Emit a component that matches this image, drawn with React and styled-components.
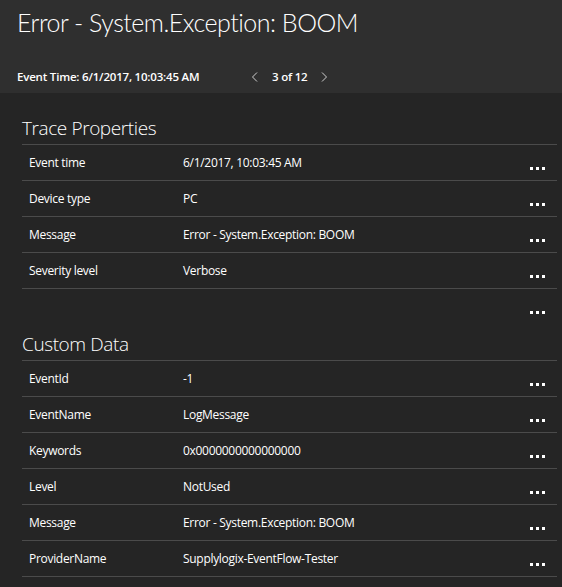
import React from 'react';
import styled, { createGlobalStyle } from 'styled-components';

const GlobalStyle = createGlobalStyle`
    html, body {
        margin: 0;
        padding: 0;
        background: #252525;
    }
    body {
        font-family: "Open Sans", "Noto Sans", sans-serif;
        color: #ffffff;
    }
`

const Header = styled.div`
    background-color: #2f2f2f;
    height: 93px;
    padding: 0 17px;
    box-sizing: border-box;
    display: flex;
    flex-direction: column;
`

const Title = styled.h1`
    margin: 0;
    padding-top: 5px;
    font-family: Lato, "Open Sans", sans-serif;
    font-size: 25px;
    font-weight: 300;
    letter-spacing: -0.5px;
    line-height: 34px;
`

const SubBar = styled.div`
    display: flex;
    align-items: center;
    margin-top: 30px;
    font-size: 11.5px;
    font-weight: 600;
    letter-spacing: -0.2px;
`

const EventTime = styled.span`
    width: 232px;
`

const Pager = styled.div`
    display: flex;
    align-items: center;
    gap: 11px;

    svg {
        width: 12px;
        height: 12px;
    }
`

const Body = styled.div`
    padding: 16px 5px 0 22px;
`

const SectionTitle = styled.h2`
    margin: 0;
    font-size: 19px;
    font-weight: 300;
    letter-spacing: -0.4px;
    line-height: 38px;
    height: 35px;
    border-bottom: 1px solid #4b4b4b;
`

const Row = styled.div`
    display: flex;
    align-items: center;
    height: ${({ bare }) => (bare ? '36px' : '35px')};
    border-bottom: ${({ bare }) => (bare ? 'none' : '1px solid #4b4b4b')};
    font-size: 12px;
    letter-spacing: -0.3px;
`

const Label = styled.div`
    width: 154px;
    padding-left: 7px;
`

const Value = styled.div`
    flex: 1;
`

const More = styled.div`
    margin-right: 12px;
    margin-top: 11px;
    display: flex;
    gap: 3px;

    span {
        width: 3px;
        height: 3px;
        background: #ffffff;
    }
`

const Dots = () => (
    <More>
        <span />
        <span />
        <span />
    </More>
)

const Chevron = ({ dir }) => (
    <svg viewBox="0 0 12 12" fill="none" stroke="#cfcfcf" strokeWidth="1">
        {dir === 'left'
            ? <path d="M8 1.5 L3.5 6 L8 10.5" />
            : <path d="M4 1.5 L8.5 6 L4 10.5" />}
    </svg>
)

const traceProps = [
    ['Event time', '6/1/2017, 10:03:45 AM'],
    ['Device type', 'PC'],
    ['Message', 'Error - System.Exception: BOOM'],
    ['Severity level', 'Verbose'],
]

const customData = [
    ['EventId', '-1'],
    ['EventName', 'LogMessage'],
    ['Keywords', '0x0000000000000000'],
    ['Level', 'NotUsed'],
    ['Message', 'Error - System.Exception: BOOM'],
    ['ProviderName', 'Supplylogix-EventFlow-Tester'],
]

export default function App() {
    return (
        <>
            <GlobalStyle />
            <Header>
                <Title>Error - System.Exception: BOOM</Title>
                <SubBar>
                    <EventTime>Event Time: 6/1/2017, 10:03:45 AM</EventTime>
                    <Pager>
                        <Chevron dir="left" />
                        <span>3 of 12</span>
                        <Chevron dir="right" />
                    </Pager>
                </SubBar>
            </Header>
            <Body>
                <SectionTitle>Trace Properties</SectionTitle>
                {traceProps.map(([k, v]) => (
                    <Row key={k}>
                        <Label>{k}</Label>
                        <Value>{v}</Value>
                        <Dots />
                    </Row>
                ))}
                <Row bare>
                    <Label />
                    <Value />
                    <Dots />
                </Row>
                <SectionTitle>Custom Data</SectionTitle>
                {customData.map(([k, v]) => (
                    <Row key={k}>
                        <Label>{k}</Label>
                        <Value>{v}</Value>
                        <Dots />
                    </Row>
                ))}
            </Body>
        </>
    )
}
